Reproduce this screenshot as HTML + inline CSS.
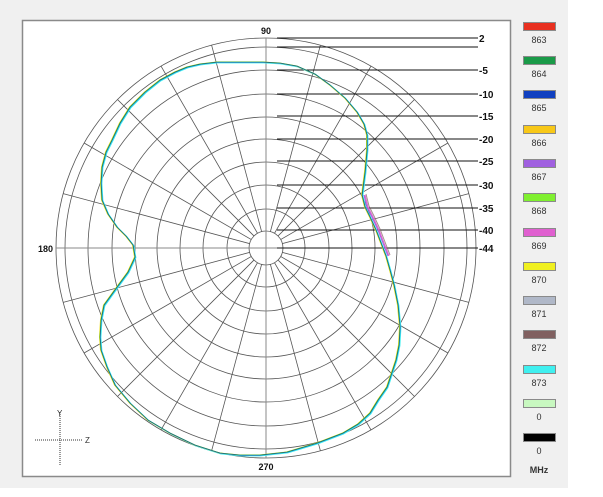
<!DOCTYPE html>
<html><head><style>
body{margin:0;width:603px;height:497px;background:#fff;overflow:hidden;font-family:"Liberation Sans",sans-serif}
#bg{position:absolute;left:0;top:0;width:568px;height:488px;background:#f0f0f0}
svg{position:absolute;left:0;top:0}
</style></head><body>
<div id="bg"></div>
<svg width="603" height="497" viewBox="0 0 603 497">
<rect x="22.5" y="20.5" width="488" height="456" fill="#fff" stroke="#8a8a8a" stroke-width="1.5"/>
<g fill="none" stroke="#555" stroke-width="0.8">
<circle cx="266" cy="248" r="210"/><circle cx="266" cy="248" r="201"/>
<circle cx="266" cy="248" r="178"/><circle cx="266" cy="248" r="154"/>
<circle cx="266" cy="248" r="131"/><circle cx="266" cy="248" r="109"/>
<circle cx="266" cy="248" r="86"/><circle cx="266" cy="248" r="63"/>
<circle cx="266" cy="248" r="39"/>
<path d="M63.2 193.6L468.8 302.4M63.2 302.4L468.8 193.6M84.1 143L447.9 353M84.1 353L447.9 143M117.5 99.5L414.5 396.5M117.5 396.5L414.5 99.5M161 66.1L371 429.9M161 429.9L371 66.1M211.6 45.2L320.4 450.8M211.6 450.8L320.4 45.2"/>
</g>
<circle cx="266" cy="248" r="17" fill="#fff" stroke="#555" stroke-width="0.8"/>
<path d="M56 248H476M266 38V458" stroke="#888" stroke-width="1"/>
<g stroke="#111" stroke-width="1">
<path d="M277 38H478M277 47H478M277 70H478M277 94H478M277 116H478M277 139H478M277 161H478M277 185H478M277 208H478M277 230H478M277 248H478"/>
</g>
<g font-size="10" font-weight="bold" fill="#111">
<text x="479" y="42">2</text><text x="479" y="74">-5</text><text x="479" y="98">-10</text>
<text x="479" y="120">-15</text><text x="479" y="143">-20</text><text x="479" y="165">-25</text>
<text x="479" y="189">-30</text><text x="479" y="212">-35</text><text x="479" y="234">-40</text>
<text x="479" y="252">-44</text>
<text x="266" y="34" text-anchor="middle" font-size="9">90</text>
<text x="38" y="252" font-size="9">180</text>
<text x="266" y="470" text-anchor="middle" font-size="9">270</text>
</g>
<defs><path id="c" d="M217 62L240 62L263 62L280 63L297 66L315 74L330 85L345 98L357 112L364 124L367 135L367 150L365 172L362 195L365 207L370 217L376 230L381 243L386 256L390 270L394 285L398 305L400 327L399 345L396 360L387 387L378 400L370 413L358 424L343 433L317 443L287 452L260 455L240 455L220 453L195 445L170 433L148 420L130 403L115 385L107 367L101 350L100 337L101 320L104 305L117 287L128 272L135 257L133 245L126 236L117 227L108 214L102 200L101 183L102 167L106 152L112 140L120 123L130 107L145 92L160 80L175 72L187 67L200 64Z"/></defs>
<g fill="none" stroke-linejoin="round">
<use href="#c" stroke="#40f0f0" stroke-width="1.4" transform="translate(0.7,0.7)"/>
<use href="#c" stroke="#f0e020" stroke-width="1" transform="translate(-0.5,0)"/>
<use href="#c" stroke="#1a9a48" stroke-width="0.8"/>
<use href="#c" stroke="#1040c0" stroke-width="0.6" transform="translate(0.3,0.3)" opacity="0.7"/>
</g>
<path d="M362 195L365 207L370 217L376 230L381 243L386 256" fill="none" stroke="#a060e0" stroke-width="1" transform="translate(2,0)"/>
<path d="M362 195L365 207L370 217L376 230L381 243L386 256" fill="none" stroke="#806060" stroke-width="1" transform="translate(4,-1)" opacity="0.7"/>
<path d="M362 195L365 207L370 217L376 230L381 243L386 256" fill="none" stroke="#e060d0" stroke-width="1" transform="translate(3,0)"/>
<g stroke="#333" stroke-width="1" stroke-dasharray="1,1">
<path d="M60 412V466M35 440H83"/>
</g>
<text x="57" y="416" font-size="8" fill="#333">Y</text>
<text x="85" y="443" font-size="8" fill="#333">Z</text>
<g stroke="#8a8a8a" stroke-width="1">
<rect x="523.5" y="22.5" width="32" height="8" fill="#e83020"/>
<rect x="523.5" y="56.5" width="32" height="8" fill="#1a9a48"/>
<rect x="523.5" y="90.5" width="32" height="8" fill="#1040c0"/>
<rect x="523.5" y="125.5" width="32" height="8" fill="#f8c818"/>
<rect x="523.5" y="159.5" width="32" height="8" fill="#a060e0"/>
<rect x="523.5" y="193.5" width="32" height="8" fill="#80f030"/>
<rect x="523.5" y="228.5" width="32" height="8" fill="#e060d0"/>
<rect x="523.5" y="262.5" width="32" height="8" fill="#f0f020"/>
<rect x="523.5" y="296.5" width="32" height="8" fill="#b0b8c8"/>
<rect x="523.5" y="330.5" width="32" height="8" fill="#806060"/>
<rect x="523.5" y="365.5" width="32" height="8" fill="#40f0f0"/>
<rect x="523.5" y="399.5" width="32" height="8" fill="#c8f8c0"/>
<rect x="523.5" y="433.5" width="32" height="8" fill="#000"/>
</g>
<g font-size="9" fill="#333" text-anchor="middle">
<text x="539" y="43">863</text><text x="539" y="77">864</text><text x="539" y="111">865</text>
<text x="539" y="146">866</text><text x="539" y="180">867</text><text x="539" y="214">868</text>
<text x="539" y="249">869</text><text x="539" y="283">870</text><text x="539" y="317">871</text>
<text x="539" y="351">872</text><text x="539" y="386">873</text><text x="539" y="420">0</text>
<text x="539" y="454">0</text>
<text x="539" y="473" font-weight="bold">MHz</text>
</g>
</svg>
</body></html>
